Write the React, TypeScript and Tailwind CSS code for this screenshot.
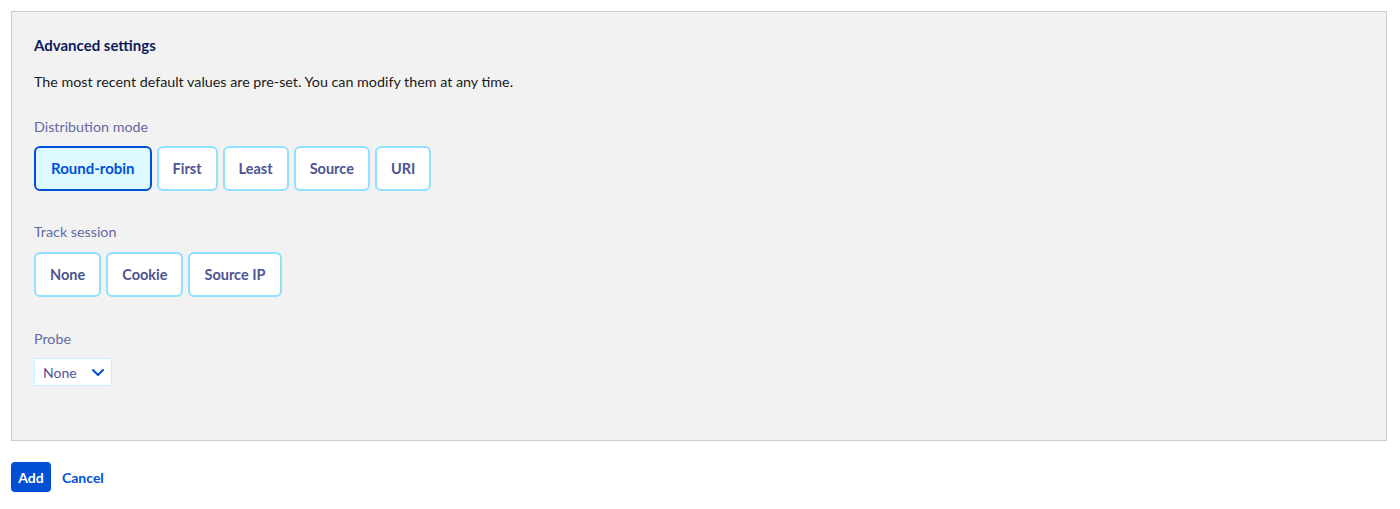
import { useState } from "react";

const font = { fontFamily: "Lato, 'Noto Sans', sans-serif" };

function Choice({ options, value, onChange }: { options: string[]; value: string; onChange: (v: string) => void }) {
  return (
    <div className="flex gap-[5px]">
      {options.map((o) => {
        const active = o === value;
        return (
          <button
            key={o}
            onClick={() => onChange(o)}
            className={
              active
                ? "h-[45px] px-[15px] rounded-[6px] border-2 border-[#0050d7] bg-[#def8ff] text-[#0050d7] text-[15px] font-bold"
                : "h-[45px] px-[14px] rounded-[6px] border-2 border-[#8fe1ff] bg-white text-[#4d5592] text-[14.5px] font-bold"
            }
          >
            {o}
          </button>
        );
      })}
    </div>
  );
}

export default function App() {
  const [mode, setMode] = useState("Round-robin");
  const [session, setSession] = useState("");

  return (
    <div className="w-[1400px] h-[509px] bg-white" style={font}>
      <div className="ml-[11px] mt-[11px] w-[1376px] border border-[#cccccc] bg-[#f2f2f2] px-[22px] pt-[23px] pb-[54px]">
        <h3 className="text-[15px] leading-[20px] font-bold text-[#0f1a5c]">Advanced settings</h3>

        <p className="mt-[16px] text-[14.3px] leading-[22px] text-[#1a1a1a]">
          The most recent default values are pre-set. You can modify them at any time.
        </p>

        <div className="mt-[23px] text-[14.3px] leading-[22px] text-[#646aa3]">Distribution mode</div>
        <div className="mt-[8px]">
          <Choice options={["Round-robin", "First", "Least", "Source", "URI"]} value={mode} onChange={setMode} />
        </div>

        <div className="mt-[30px] text-[14.3px] leading-[22px] text-[#646aa3]">Track session</div>
        <div className="mt-[9px]">
          <Choice options={["None", "Cookie", "Source IP"]} value={session} onChange={setSession} />
        </div>

        <div className="mt-[31px] text-[14.3px] leading-[22px] text-[#646aa3]">Probe</div>
        <div className="mt-[8px] flex h-[28px] w-[78px] items-center justify-between border border-[#bff0ff] bg-white pl-[8px] pr-[6px]">
          <span className="text-[14px] text-[#4d5592]">None</span>
          <svg width="14" height="14" viewBox="0 0 14 14" fill="none">
            <path d="M2 5l5 5 5-5" stroke="#0050d7" strokeWidth="2" strokeLinecap="round" strokeLinejoin="round" />
          </svg>
        </div>
      </div>

      <div className="ml-[11px] mt-[21px] flex items-center gap-[11px]">
        <button className="h-[30px] w-[40px] rounded-[4px] bg-[#0050d7] text-[14px] font-bold text-white">Add</button>
        <button className="text-[14px] font-bold text-[#0050d7]">Cancel</button>
      </div>
    </div>
  );
}
